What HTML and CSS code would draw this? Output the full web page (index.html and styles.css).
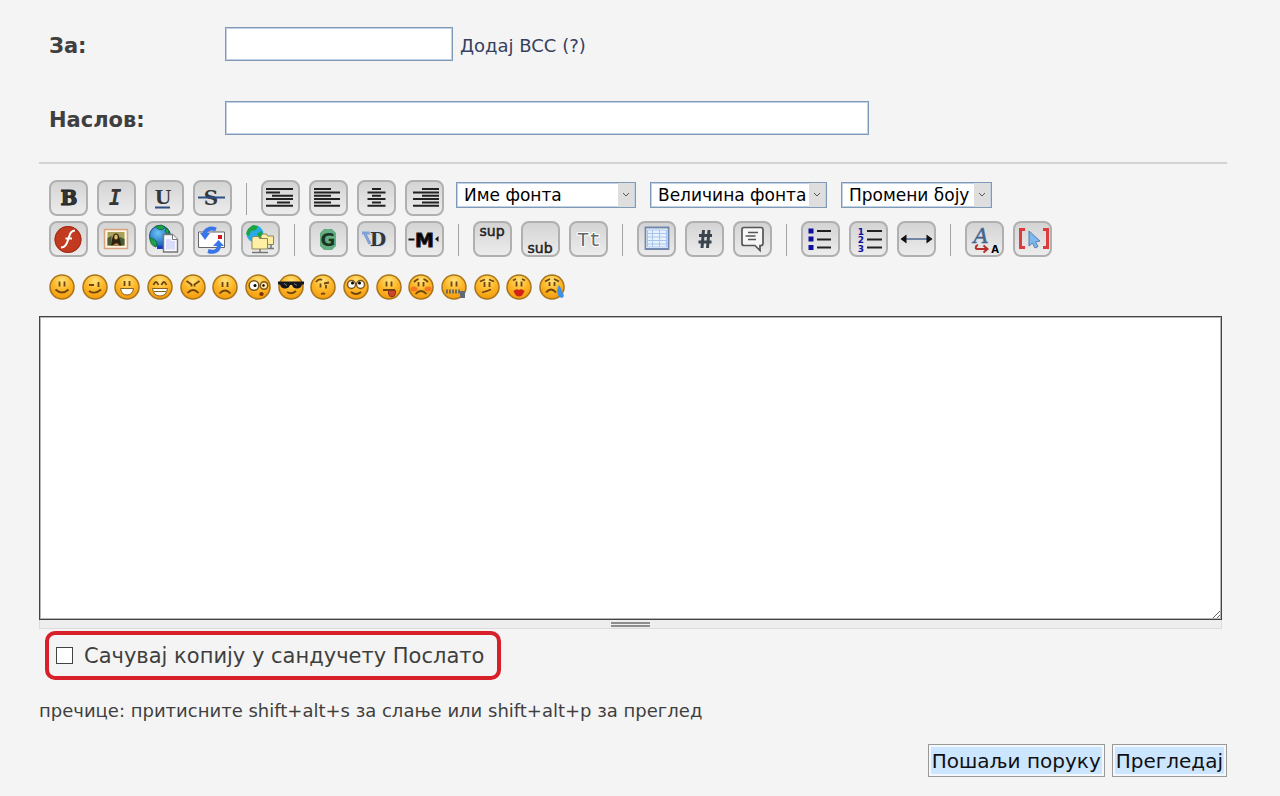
FILE: index.html
```html
<!DOCTYPE html>
<html lang="sr">
<head>
    <meta charset="UTF-8">
    <meta name="viewport" content="width=device-width, initial-scale=1.0">
    <title>Нова порука</title>
    <link rel="stylesheet" href="styles.css">
</head>
<body>
    <svg class="defs" aria-hidden="true">
        <defs>
            <radialGradient id="skin" cx="50%" cy="25%" r="75%">
                <stop offset="0" stop-color="#ffe27c"/>
                <stop offset="0.5" stop-color="#fdb82a"/>
                <stop offset="1" stop-color="#f39a0c"/>
            </radialGradient>
            <radialGradient id="earth" cx="40%" cy="35%" r="70%">
                <stop offset="0" stop-color="#6cc4f5"/>
                <stop offset="1" stop-color="#1257b5"/>
            </radialGradient>
        </defs>
        <symbol id="face" viewBox="0 0 26 26">
            <circle cx="13" cy="13" r="12" fill="url(#skin)" stroke="#a8741c" stroke-width="1.5"/>
        </symbol>
    </svg>

    <form class="compose">
        <div class="field">
            <label for="to">За:</label>
            <input type="text" id="to" class="text-input short">
            <a href="#bcc" class="bcc">Додај BCC (?)</a>
        </div>
        <div class="field">
            <label for="subject">Наслов:</label>
            <input type="text" id="subject" class="text-input long">
        </div>

        <hr class="divider">

        <div class="toolbar">
            <div class="tool-row">
                <button type="button" class="tool" aria-label="Подебљано"><svg viewBox="2 2 35 32"><text class="serif heavy" x="20" y="25" font-size="20">B</text></svg></button>
                <button type="button" class="tool" aria-label="Курзив"><svg viewBox="2 2 35 32"><text class="italic" x="18" y="25" font-size="21">I</text></svg></button>
                <button type="button" class="tool" aria-label="Подвучено"><svg viewBox="2 2 35 32"><text class="serif" x="18" y="24" font-size="19">U</text><path d="M10 27.500h15" stroke="#2d4f85" stroke-width="2"/></svg></button>
                <button type="button" class="tool" aria-label="Прецртано"><svg viewBox="2 2 35 32"><text class="serif" x="18" y="25" font-size="20">S</text><path d="M5 17.500h27" stroke="#2d4f85" stroke-width="2"/></svg></button>
                <span class="sep"></span>
                <button type="button" class="tool" aria-label="Без поравнања"><svg viewBox="2 2 35 32"><path class="lines" d="M5 9h27M5 12.400h14M11 15.700h21M5 19h27M16 22.400h13M5 25.700h27"/></svg></button>
                <button type="button" class="tool" aria-label="Поравнај лево"><svg viewBox="2 2 35 32"><path class="lines" d="M5 9h17M5 12.400h26M5 15.700h17M5 19h26M5 22.400h17M5 25.700h26"/></svg></button>
                <button type="button" class="tool" aria-label="Поравнај по средини"><svg viewBox="2 2 35 32"><path class="lines" d="M15 9h9M10.500 12.400h18M15 15.700h9M10.500 19h18M15 22.400h9M10.500 25.700h18"/></svg></button>
                <button type="button" class="tool" aria-label="Поравнај десно"><svg viewBox="2 2 35 32"><path class="lines" d="M17 9h17M8 12.400h26M17 15.700h17M8 19h26M17 22.400h17M8 25.700h26"/></svg></button>
                <div class="selects">
                    <span class="select font-name">
                        <select aria-label="Име фонта"><option>Име фонта</option></select>
                        <svg class="arrow" viewBox="0 0 16 24"><path d="M5 10l3 3 3-3"/></svg>
                    </span>
                    <span class="select font-size">
                        <select aria-label="Величина фонта"><option>Величина фонта</option></select>
                        <svg class="arrow" viewBox="0 0 16 24"><path d="M5 10l3 3 3-3"/></svg>
                    </span>
                    <span class="select font-color">
                        <select aria-label="Промени боју"><option>Промени боју</option></select>
                        <svg class="arrow" viewBox="0 0 16 24"><path d="M5 10l3 3 3-3"/></svg>
                    </span>
                </div>
            </div>

            <div class="tool-row">
                <button type="button" class="tool" aria-label="Флеш"><svg viewBox="2 2 35 32"><circle cx="19" cy="18.500" r="13.500" fill="#c23a20"/><circle cx="19" cy="18.500" r="13" fill="none" stroke="#9e2c18"/><path d="M26 9.500c-4 0-5 3-6.500 8s-3 9-7.500 9M16.500 17.500h6.500" fill="none" stroke="#fff" stroke-width="2"/></svg></button>
                <button type="button" class="tool" aria-label="Слика"><svg viewBox="2 2 35 32"><path d="M7.500 8.500h23v19h-23z" fill="#fff3e2" stroke="#d8a37e" stroke-width="1.500"/><path d="M10.500 11h17v13.500h-17z" fill="#a9a05c"/><path d="M10.500 17l4-2v9.500h-4zM23 16l4.500 2v6.500h-5z" fill="#4c5a34"/><path d="M14 24.500c1-4 1-12 5-12s4 8 5.500 12z" fill="#2c2210"/><ellipse cx="19" cy="16" rx="1.800" ry="2.500" fill="#e6b866"/><path d="M16 24.500l2-2h3l1 2z" fill="#c68b4a"/></svg></button>
                <button type="button" class="tool" aria-label="Веза"><svg viewBox="2 2 35 32"><circle cx="15" cy="15" r="10.500" fill="url(#earth)" stroke="#174f8a"/><path d="M10 5.500l6-1.500 4 2-3 3-4-1zM5 17c3 0 6 2 7 5l-1 4c-4-1-6-4-6-9zM21 7l3 3-1 4-3-4z" fill="#1fa04b" stroke="#0c6b30" stroke-width=".8"/><path d="M12 25h7v3h-7z" fill="#1c38c8"/><path d="M18.500 13.500h9l5 5v12.500h-14z" fill="#f8f8ff" stroke="#777" stroke-width="1.400"/><path d="M21 18h5v2h4v8.500h-9z" fill="#d9dcfa"/><path d="M27.500 13.500v5h5" fill="#fff" stroke="#777"/></svg></button>
                <button type="button" class="tool" aria-label="Е-пошта"><svg viewBox="2 2 35 32"><path d="M5.500 11h26v15.500h-26z" fill="#fff" stroke="#666"/><path d="M25 14h4v4h-4z" fill="#d4151b"/><path d="M11 15c0-6 6-9 12-6.500" fill="none" stroke="#3976e8" stroke-width="4"/><path d="M7 12h10l-5 7z" fill="#3976e8"/><path d="M15 30c6 2 11 0 11-6" fill="none" stroke="#3976e8" stroke-width="4"/><path d="M20 25h11l-5.500-6z" fill="#3976e8"/></svg></button>
                <button type="button" class="tool" aria-label="FTP"><svg viewBox="2 2 35 32"><circle cx="14" cy="13" r="8.500" fill="#28a9ea"/><path d="M7 8l5-4 5 1-2 4-5 1-2 5-3-2zM16 13l4-3 2 3-3 5z" fill="#18a63b"/><path d="M20 15l1.500-2h4l1 2h6v8.500H20z" fill="#fdeea2" stroke="#8f855c"/><path d="M11 17.500l1.500-2h5l1 2h8V28H11z" fill="#fdf0a4" stroke="#8f855c"/><path d="M19 28v3M11 31.500h16M30 24v3M27 27.500h6" stroke="#777" stroke-width="1.500"/></svg></button>
                <span class="sep"></span>
                <button type="button" class="tool" aria-label="Сјај"><svg viewBox="2 2 35 32"><path d="M15 8h8l4 4v13l-4 4h-8l-4-4V12z" fill="#65ad83"/><text class="sans" x="19" y="25" font-size="18" fill="#183626">G</text></svg></button>
                <button type="button" class="tool" aria-label="Сенка"><svg viewBox="2 2 35 32"><path d="M5 12h12M8 13l5 10" stroke="#7fa3d8" stroke-width="3"/><text class="serif shadow" x="21" y="25" font-size="19">D</text></svg></button>
                <button type="button" class="tool" aria-label="Покретни текст"><svg viewBox="2 2 35 32"><path d="M3.500 18.500h6" stroke="#111" stroke-width="2"/><text class="sans heavy" x="19.500" y="25.500" font-size="19">M</text><path d="M33.500 15v6l-3.500-3z" fill="#111"/></svg></button>
                <span class="sep"></span>
                <button type="button" class="tool" aria-label="Изложилац"><svg viewBox="2 2 35 32"><text class="sans light" x="19" y="15" font-size="14">sup</text></svg></button>
                <button type="button" class="tool" aria-label="Индекс"><svg viewBox="2 2 35 32"><text class="sans light" x="19" y="32" font-size="14">sub</text></svg></button>
                <button type="button" class="tool" aria-label="Телетајп"><svg viewBox="2 2 35 32"><text class="mono" x="20" y="25" font-size="20">Tt</text></svg></button>
                <span class="sep"></span>
                <button type="button" class="tool" aria-label="Табела"><svg viewBox="2 2 35 32"><path d="M8.500 6.500h23v21.500h-23z" fill="#fff" stroke="#7188ac" stroke-width="1.800"/><path d="M10.500 9h19v17h-19z" fill="#e9f2ff"/><path d="M10.500 9h19v17h-19zM10.500 12.500h19M10.500 16h19M10.500 19.500h19M10.500 23h19M15.500 9v17M22.500 9v17" fill="none" stroke="#a5c4ef"/></svg></button>
                <button type="button" class="tool" aria-label="Код"><svg viewBox="2 2 35 32"><path d="M18.500 9l-1.500 18M24 9l-1.500 18M14 14.500h13M13.500 21h13" stroke="#39444f" stroke-width="3"/></svg></button>
                <button type="button" class="tool" aria-label="Цитат"><svg viewBox="2 2 35 32"><path d="M11 6.500h17q2 0 2 2v14q0 2-2 2h-1v5l-5-5H11q-2 0-2-2v-14q0-2 2-2z" fill="#f6f6f6" stroke="#555" stroke-width="1.700"/><path d="M15 11.500h10M12.500 15h10M15 18.500h8" stroke="#555" stroke-width="1.500"/></svg></button>
                <span class="sep"></span>
                <button type="button" class="tool" aria-label="Листа"><svg viewBox="2 2 35 32"><path d="M7.500 7.500h5v5h-5zM7.500 15.500h5v5h-5zM7.500 24h5v5h-5z" fill="#10109c"/><path d="M16 10h14M16 18.500h14M16 26.500h14" stroke="#222" stroke-width="2"/></svg></button>
                <button type="button" class="tool" aria-label="Нумерисана листа"><svg viewBox="2 2 35 32"><g class="digits"><text x="12" y="13.500">1</text><text x="12" y="22">2</text><text x="12" y="30.500">3</text></g><path d="M18 10h15M18 18.500h15M18 26.500h15" stroke="#222" stroke-width="2"/></svg></button>
                <button type="button" class="tool" aria-label="Хоризонтална линија"><svg viewBox="2 2 35 32"><path d="M8 18h23" stroke="#4b6b93" stroke-width="1.500"/><path d="M3.500 18l6-4.500v9zM35.500 18l-6-4.500v9z" fill="#111"/></svg></button>
                <span class="sep"></span>
                <button type="button" class="tool" aria-label="Уклони форматирање"><svg viewBox="2 2 35 32"><text class="script" x="16" y="22" font-size="21">A</text><path d="M13 24c-3 1-3 4 0 4h9M18.500 24.500l4 3.500-4 3.500" fill="none" stroke="#b5302b" stroke-width="2"/><text class="sans" x="30" y="32" font-size="10">A</text></svg></button>
                <button type="button" class="tool" aria-label="Промени приказ"><svg viewBox="2 2 35 32"><path d="M12 8.500H7.500v18H12M30 8.500h4.500v18H30" fill="none" stroke="#dc3c3c" stroke-width="3"/><path d="M16 10v15l3.500-3 2.500 5 3-1.500-2.500-4.500 4.500-1z" fill="#7db9ee" stroke="#527eae"/></svg></button>
            </div>
        </div>

        <div class="smileys">
            <button type="button" aria-label="Осмех"><svg viewBox="0 0 26 26"><use href="#face"/><path class="ink" d="M10.500 7.500v5M15.500 7.500v5M6.500 15.500q6.500 6 13 0"/></svg></button>
            <button type="button" aria-label="Намигивање"><svg viewBox="0 0 26 26"><use href="#face"/><path class="ink" d="M7 11h5M16.500 8v5M7 17q6 4 12-1.500"/></svg></button>
            <button type="button" aria-label="Смех"><svg viewBox="0 0 26 26"><use href="#face"/><path class="ink" d="M10.500 7v5M15.500 7v5"/><path class="mouth" d="M6.500 14.500h13q-1 6.500-6.500 6.500t-6.500-6.500z"/></svg></button>
            <button type="button" aria-label="Кез"><svg viewBox="0 0 26 26"><use href="#face"/><path class="ink" d="M6.500 11q2.500-6 5 0M14.500 11q2.500-6 5 0"/><path class="mouth" d="M5.500 14.500h15q-1 7.500-7.500 7.500t-7.500-7.500z"/><path d="M7 17.500h12" stroke="#8b611e"/></svg></button>
            <button type="button" aria-label="Љутња"><svg viewBox="0 0 26 26"><use href="#face"/><path class="ink" d="M6.500 7l5 3.500v2M19.500 7l-5 3.500v2M7.500 19q5.500-6 11 0"/></svg></button>
            <button type="button" aria-label="Туга"><svg viewBox="0 0 26 26"><use href="#face"/><path class="ink" d="M10.500 8v5M15.500 8v5M7.500 19.500q5.500-6 11 0"/></svg></button>
            <button type="button" aria-label="Чуђење"><svg viewBox="0 0 26 26"><use href="#face"/><circle cx="9" cy="11.500" r="4.800" fill="#fff" stroke="#7d5515" stroke-width="1.500"/><circle cx="19" cy="11.500" r="3.700" fill="#ffe9ad" stroke="#7d5515" stroke-width="1.500"/><circle cx="10" cy="11.500" r="1.500"/><circle cx="18.500" cy="11.500" r="1.200"/><ellipse cx="16.500" cy="20" rx="2.200" ry="2" fill="#7b2e10"/></svg></button>
            <button type="button" aria-label="Кул"><svg viewBox="0 0 26 26"><use href="#face"/><path d="M0 7.500h26v3h-2q-1 4-5 4t-5-3.500h-2q-1 3.500-5 3.500t-5-4H0z" fill="#15171c"/><path d="M6 9.500l3 2M16 9.500l3 2" stroke="#777"/><path class="ink" d="M9 18q4.500 3 9-1"/></svg></button>
            <button type="button" aria-label="Сумња"><svg viewBox="0 0 26 26"><use href="#face"/><path class="ink" d="M6 8q3-4 6-2M14 9.500l5-1M10.500 9.500v4M16 11v3.500M11 20q2.500-1 4 0"/></svg></button>
            <button type="button" aria-label="Превртање очима"><svg viewBox="0 0 26 26"><use href="#face"/><circle cx="8.500" cy="10.500" r="4" fill="#fff" stroke="#7d5515" stroke-width="1.500"/><circle cx="17.500" cy="10.500" r="4" fill="#fff" stroke="#7d5515" stroke-width="1.500"/><circle cx="9.500" cy="9" r="1.500"/><circle cx="16.500" cy="9" r="1.500"/><path class="ink" d="M8 18q5 4 10 0"/></svg></button>
            <button type="button" aria-label="Плажење"><svg viewBox="0 0 26 26"><use href="#face"/><path class="ink" d="M10.500 7.500v5M15.500 7.500v5M7 16h12"/><path d="M12.500 16.500h7v3q-1 3.500-3.500 3.500t-3.500-3z" fill="#ca462f" stroke="#8b331b"/></svg></button>
            <button type="button" aria-label="Стид"><svg viewBox="0 0 26 26"><use href="#face"/><ellipse cx="6" cy="15" rx="3.500" ry="2.500" fill="#f57722"/><ellipse cx="20" cy="15" rx="3.500" ry="2.500" fill="#f57722"/><path class="ink" d="M6 8q2-2 4.500-3M20 8q-2-2-4.500-3M10.500 8v4.500M15.500 8v4.500M7.500 20q5.500-6 11 0"/></svg></button>
            <button type="button" aria-label="Ћутање"><svg viewBox="0 0 26 26"><use href="#face"/><path class="ink" d="M10.500 7.500v5M15.500 7.500v5"/><path d="M5 17.500h15" stroke="#746b5b" stroke-width="4" stroke-dasharray="2 1"/><path d="M19 17h5v7h-5z" fill="#636873"/></svg></button>
            <button type="button" aria-label="Збуњеност"><svg viewBox="0 0 26 26"><use href="#face"/><path class="ink" d="M6 7.500l5-2M15 5.500l5 2M10.500 8v5M15.500 8v5M8 18.500q4-1 9-3"/></svg></button>
            <button type="button" aria-label="Пољубац"><svg viewBox="0 0 26 26"><use href="#face"/><path class="ink" d="M7 6.500l3-1.500M19 6.500l-3-1.500M10.500 7.500v5M15.500 7.500v5"/><path d="M7.500 17q3-3 5.500-1 2.500-2 5.500 1-2 5.500-5.500 5.500T7.500 17z" fill="#d3211c"/></svg></button>
            <button type="button" aria-label="Плач"><svg viewBox="0 0 26 26"><use href="#face"/><path class="ink" d="M6 7.500l5-2.500M15 5l5 2.500M10.500 8v4M15.500 8v4M7 18.500q5-6 10 0"/><path d="M20 11q3 4 3 7 3 3 1 5.500-4 1-5-3-2-4 1-9.500z" fill="#3d91e6"/></svg></button>
        </div>

        <div class="editor">
            <textarea aria-label="Порука"></textarea>
            <div class="grippie"><span></span></div>
        </div>

        <label class="save-copy">
            <input type="checkbox">
            Сачувај копију у сандучету Послато
        </label>

        <p class="hint">пречице: притисните shift+alt+s за слање или shift+alt+p за преглед</p>

        <div class="actions">
            <button type="submit">Пошаљи поруку</button>
            <button type="button">Прегледај</button>
        </div>
    </form>
</body>
</html>
```

FILE: styles.css
```css
* {
    box-sizing: border-box;
}
body {
    margin: 0;
    background: #f4f4f4;
    color: #3f3f3f;
    font-family: Verdana, "DejaVu Sans", sans-serif;
    font-size: 18px;
}
button, input, select, textarea {
    font-family: inherit;
}
.defs {
    position: absolute;
    width: 0;
    height: 0;
}
.compose {
    padding: 27px 53px 19px 39px;
}
.field {
    display: flex;
    align-items: center;
    margin-bottom: 40px;
}
.field label {
    width: 186px;
    padding: 4px 0 0 10px;
    font-size: 21px;
    font-weight: bold;
}
.text-input {
    height: 34px;
    padding: 2px 6px;
    border: 1px solid #7f9ab8;
    box-shadow: inset 0 0 0 1px #c3d2e2;
    background: #fff;
    font-size: 18px;
}
.short {
    width: 228px;
}
.long {
    width: 644px;
}
.bcc {
    margin-left: 7px;
    padding-top: 2px;
    color: #35415f;
    text-decoration: none;
}
.divider {
    height: 2px;
    margin: -13px 0 16px;
    border: none;
    background: #d2d2d2;
}

/* toolbar */
.toolbar {
    display: flex;
    flex-direction: column;
    gap: 5px;
    padding-left: 10px;
}
.tool-row {
    display: flex;
    gap: 9px;
}
.tool {
    flex: none;
    width: 39px;
    height: 36px;
    padding: 0;
    border: 2px solid #b0b0b0;
    border-radius: 8px;
    background: linear-gradient(#d4d4d4, #ececec);
    cursor: pointer;
}
.tool svg {
    display: block;
    width: 35px;
    height: 32px;
}
.tool text {
    text-anchor: middle;
}
.serif {
    font-family: "DejaVu Serif", serif;
    font-weight: bold;
    fill: #363636;
}
.heavy {
    stroke: #222;
    stroke-width: 1px;
}
.shadow {
    stroke: #cfdcf0;
    stroke-width: 2px;
    paint-order: stroke;
}
.italic {
    font-family: "DejaVu Sans Mono", monospace;
    font-style: italic;
    font-weight: bold;
    fill: #363636;
}
.sans {
    font-family: "DejaVu Sans", sans-serif;
    font-weight: bold;
}
.sans.light {
    font-weight: normal;
    fill: #222;
    stroke: #222;
    stroke-width: 0.5px;
}
.mono {
    font-family: "Liberation Mono", monospace;
    fill: #666;
    stroke: #fff;
    stroke-width: 2px;
    paint-order: stroke;
}
.script {
    font-family: "DejaVu Serif", serif;
    font-style: italic;
    fill: #42648e;
    stroke: #42648e;
    stroke-width: 0.5px;
}
.digits {
    font-family: "DejaVu Sans", sans-serif;
    font-size: 9px;
    font-weight: bold;
    fill: #10109c;
}
.lines {
    stroke: #222;
    stroke-width: 2px;
}
.sep {
    width: 1px;
    margin: 3px 5px 1px;
    background: #a2a2a2;
}
.selects {
    display: flex;
    gap: 14px;
    margin: 2px 0 0 3px;
}
.select {
    position: relative;
    height: 26px;
}
.select select {
    appearance: none;
    width: 100%;
    height: 26px;
    padding: 0 18px 0 7px;
    border: 1px solid #7f9ab8;
    border-radius: 0;
    box-shadow: inset 0 0 0 1px #c3d2e2;
    background: #fff;
    color: #000;
    font-size: 17px;
}
.font-name {
    width: 180px;
}
.font-size {
    width: 177px;
}
.font-color {
    width: 151px;
}
.arrow {
    position: absolute;
    top: 1px;
    right: 2px;
    width: 16px;
    height: 24px;
    background: #dedede;
    pointer-events: none;
}
.arrow path {
    fill: none;
    stroke: #555;
}

.smileys {
    display: flex;
    justify-content: space-between;
    width: 516px;
    margin: 17px 0 16px 10px;
}
.smileys button {
    width: 26px;
    height: 26px;
    padding: 0;
    border: none;
    background: none;
    cursor: pointer;
}
.smileys svg {
    display: block;
}
.ink {
    fill: none;
    stroke: #70450f;
    stroke-width: 1.8px;
}
.mouth {
    fill: #fff;
    stroke: #8b611e;
}

/* message box */
.editor {
    margin-right: 5px;
}
textarea {
    display: block;
    width: 100%;
    height: 304px;
    padding: 6px;
    border: 1px solid #444;
    box-shadow: inset 0 0 0 1px #b5b5b5;
    background: #fff;
    font-size: 18px;
    resize: vertical;
}
.grippie {
    display: flex;
    justify-content: center;
    align-items: center;
    height: 9px;
    border: 1px solid #dcdcdc;
    border-top: none;
    background: #eee;
}
.grippie span {
    width: 39px;
    height: 5px;
    border: solid #8d8d8d;
    border-width: 2px 0;
}
.save-copy {
    display: inline-flex;
    align-items: center;
    gap: 11px;
    height: 49px;
    margin: 2px 0 0 6px;
    padding: 0 13px 0 7px;
    border: 4px solid #d8202a;
    border-radius: 10px;
    font-size: 21px;
}
.save-copy input {
    appearance: none;
    width: 17px;
    height: 17px;
    margin: 0;
    border: 1px solid #444;
    background: #fff;
}
.save-copy input:checked {
    background: #505050;
}
.hint {
    margin: 20px 0 22px;
    line-height: 22px;
}
.actions {
    display: flex;
    justify-content: flex-end;
    gap: 7px;
}
.actions button {
    height: 33px;
    padding: 0 3px;
    border: 1px solid #999;
    background: #cde6ff;
    box-shadow: inset 0 0 0 2px #f4f8fc;
    color: #111;
    font-size: 20px;
    cursor: pointer;
}
```
